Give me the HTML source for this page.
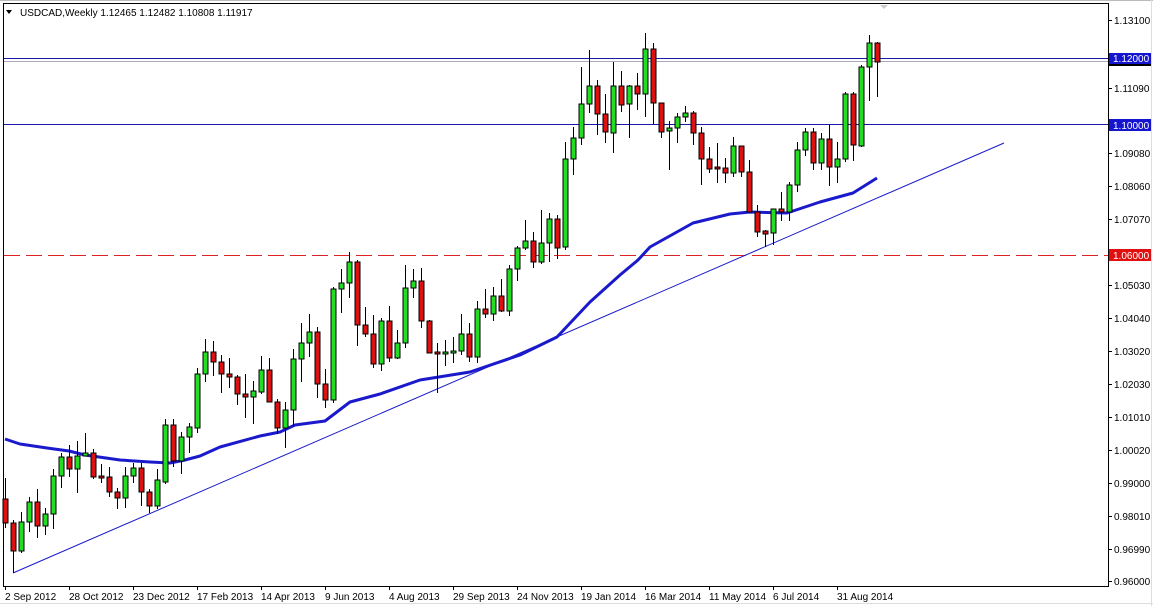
<!DOCTYPE html>
<html><head><meta charset="utf-8"><style>
html,body{margin:0;padding:0;background:#fff;width:1153px;height:606px;overflow:hidden}
svg{display:block}
text{font-family:"Liberation Sans",sans-serif;font-size:10px;fill:#000}
.g{fill:#22dd22;stroke:#000;stroke-width:1}
.r{fill:#dd1111;stroke:#000;stroke-width:1}
</style></head><body>
<svg width="1153" height="606" viewBox="0 0 1153 606" xmlns="http://www.w3.org/2000/svg">
<rect x="0" y="0" width="1153" height="606" fill="#fff"/>
<line x1="0" y1="0.5" x2="1153" y2="0.5" stroke="#bbb"/>
<line x1="1151.5" y1="0" x2="1151.5" y2="606" stroke="#ddd"/>
<line x1="0" y1="603.5" x2="1153" y2="603.5" stroke="#ddd"/>
<rect x="3.5" y="3.5" width="1105" height="583" fill="none" stroke="#000"/>
<!-- header -->
<path d="M6 10 L12 10 L9 14 Z" fill="#000"/>
<text x="20" y="16">USDCAD,Weekly  1.12465 1.12482 1.10808 1.11917</text>
<path d="M880 5 L888 5 L884 9 Z" fill="#ccc"/>
<!-- horizontal lines -->
<line x1="4" y1="58.5" x2="1108" y2="58.5" stroke="#1a1aaa"/>
<line x1="4" y1="61.5" x2="1108" y2="61.5" stroke="#aab"/>
<line x1="4" y1="124.5" x2="1108" y2="124.5" stroke="#1a1aaa"/>
<line x1="4" y1="255.5" x2="1108" y2="255.5" stroke="#dd2222" stroke-dasharray="16,6"/>
<!-- trendline -->
<line x1="13" y1="573" x2="1004" y2="143" stroke="#1a1acc" stroke-width="1"/>
<!-- MA -->
<polyline fill="none" stroke="#1a1acc" stroke-width="3" stroke-linejoin="round" points="5,439 20,444 47,448 69,451 85,455 120,460 150,462 170,463 185,460 200,456 220,447 260,436 280,432 295,425 325,421 350,402 380,394 420,380 470,372 520,355 557,337 590,302 620,275 638,260 650,247 693,223 730,214 750,212 787,213 820,202 853,193 877,178"/>
<!-- candles -->
<g stroke="#000" stroke-width="1">
<line x1="5.5" y1="478" x2="5.5" y2="528"/><rect class="r" x="3" y="499" width="5" height="24"/>
<line x1="13.5" y1="520" x2="13.5" y2="573"/><rect class="r" x="11" y="523" width="5" height="28"/>
<line x1="21.5" y1="512" x2="21.5" y2="553"/><rect class="g" x="19" y="522" width="5" height="29"/>
<line x1="29.5" y1="497" x2="29.5" y2="532"/><rect class="g" x="27" y="502" width="5" height="20"/>
<line x1="37.5" y1="489" x2="37.5" y2="538"/><rect class="r" x="35" y="502" width="5" height="24"/>
<line x1="45.5" y1="508" x2="45.5" y2="535"/><rect class="g" x="43" y="514" width="5" height="12"/>
<line x1="53.5" y1="469" x2="53.5" y2="529"/><rect class="g" x="51" y="476" width="5" height="38"/>
<line x1="61.5" y1="453" x2="61.5" y2="488"/><rect class="g" x="59" y="457" width="5" height="19"/>
<line x1="69.5" y1="445" x2="69.5" y2="477"/><rect class="r" x="67" y="457" width="5" height="12"/>
<line x1="77.5" y1="441" x2="77.5" y2="493"/><rect class="g" x="75" y="456" width="5" height="13"/>
<line x1="85.5" y1="433" x2="85.5" y2="456"/><rect class="g" x="83" y="453" width="5" height="3"/>
<line x1="93.5" y1="449" x2="93.5" y2="479"/><rect class="r" x="91" y="453" width="5" height="24"/>
<line x1="101.5" y1="464" x2="101.5" y2="483"/><rect class="r" x="99" y="476" width="5" height="2"/>
<line x1="109.5" y1="467" x2="109.5" y2="497"/><rect class="r" x="107" y="477" width="5" height="15"/>
<line x1="117.5" y1="488" x2="117.5" y2="509"/><rect class="r" x="115" y="492" width="5" height="6"/>
<line x1="125.5" y1="467" x2="125.5" y2="508"/><rect class="g" x="123" y="476" width="5" height="22"/>
<line x1="133.5" y1="463" x2="133.5" y2="483"/><rect class="g" x="131" y="468" width="5" height="8"/>
<line x1="141.5" y1="463" x2="141.5" y2="506"/><rect class="r" x="139" y="468" width="5" height="24"/>
<line x1="149.5" y1="489" x2="149.5" y2="513"/><rect class="r" x="147" y="492" width="5" height="14"/>
<line x1="157.5" y1="469" x2="157.5" y2="509"/><rect class="g" x="155" y="480" width="5" height="26"/>
<line x1="165.5" y1="419" x2="165.5" y2="484"/><rect class="g" x="163" y="425" width="5" height="57"/>
<line x1="173.5" y1="419" x2="173.5" y2="467"/><rect class="r" x="171" y="425" width="5" height="36"/>
<line x1="181.5" y1="432" x2="181.5" y2="474"/><rect class="g" x="179" y="437" width="5" height="24"/>
<line x1="189.5" y1="423" x2="189.5" y2="453"/><rect class="g" x="187" y="427" width="5" height="10"/>
<line x1="197.5" y1="368" x2="197.5" y2="433"/><rect class="g" x="195" y="374" width="5" height="54"/>
<line x1="205.5" y1="339" x2="205.5" y2="382"/><rect class="g" x="203" y="352" width="5" height="22"/>
<line x1="213.5" y1="341" x2="213.5" y2="376"/><rect class="r" x="211" y="352" width="5" height="10"/>
<line x1="221.5" y1="355" x2="221.5" y2="393"/><rect class="r" x="219" y="362" width="5" height="12"/>
<line x1="229.5" y1="358" x2="229.5" y2="388"/><rect class="r" x="227" y="374" width="5" height="3"/>
<line x1="237.5" y1="375" x2="237.5" y2="405"/><rect class="r" x="235" y="377" width="5" height="17"/>
<line x1="245.5" y1="374" x2="245.5" y2="418"/><rect class="r" x="243" y="394" width="5" height="3"/>
<line x1="253.5" y1="381" x2="253.5" y2="424"/><rect class="g" x="251" y="391" width="5" height="6"/>
<line x1="261.5" y1="356" x2="261.5" y2="394"/><rect class="g" x="259" y="370" width="5" height="22"/>
<line x1="269.5" y1="358" x2="269.5" y2="402"/><rect class="r" x="267" y="370" width="5" height="32"/>
<line x1="277.5" y1="399" x2="277.5" y2="434"/><rect class="r" x="275" y="402" width="5" height="26"/>
<line x1="285.5" y1="402" x2="285.5" y2="448"/><rect class="g" x="283" y="410" width="5" height="18"/>
<line x1="293.5" y1="349" x2="293.5" y2="426"/><rect class="g" x="291" y="359" width="5" height="51"/>
<line x1="301.5" y1="323" x2="301.5" y2="382"/><rect class="g" x="299" y="343" width="5" height="16"/>
<line x1="309.5" y1="314" x2="309.5" y2="357"/><rect class="g" x="307" y="332" width="5" height="11"/>
<line x1="317.5" y1="327" x2="317.5" y2="398"/><rect class="r" x="315" y="332" width="5" height="52"/>
<line x1="325.5" y1="369" x2="325.5" y2="408"/><rect class="r" x="323" y="384" width="5" height="16"/>
<line x1="333.5" y1="287" x2="333.5" y2="403"/><rect class="g" x="331" y="289" width="5" height="111"/>
<line x1="341.5" y1="269" x2="341.5" y2="313"/><rect class="g" x="339" y="283" width="5" height="6"/>
<line x1="349.5" y1="252" x2="349.5" y2="298"/><rect class="g" x="347" y="262" width="5" height="21"/>
<line x1="357.5" y1="260" x2="357.5" y2="346"/><rect class="r" x="355" y="262" width="5" height="63"/>
<line x1="365.5" y1="307" x2="365.5" y2="337"/><rect class="r" x="363" y="325" width="5" height="9"/>
<line x1="373.5" y1="315" x2="373.5" y2="368"/><rect class="r" x="371" y="334" width="5" height="30"/>
<line x1="381.5" y1="318" x2="381.5" y2="371"/><rect class="g" x="379" y="321" width="5" height="43"/>
<line x1="389.5" y1="306" x2="389.5" y2="362"/><rect class="r" x="387" y="321" width="5" height="37"/>
<line x1="397.5" y1="330" x2="397.5" y2="359"/><rect class="g" x="395" y="343" width="5" height="15"/>
<line x1="405.5" y1="265" x2="405.5" y2="348"/><rect class="g" x="403" y="288" width="5" height="55"/>
<line x1="413.5" y1="269" x2="413.5" y2="298"/><rect class="g" x="411" y="281" width="5" height="7"/>
<line x1="421.5" y1="268" x2="421.5" y2="328"/><rect class="r" x="419" y="281" width="5" height="40"/>
<line x1="429.5" y1="320" x2="429.5" y2="353"/><rect class="r" x="427" y="321" width="5" height="32"/>
<line x1="437.5" y1="343" x2="437.5" y2="393"/><rect class="r" x="435" y="352" width="5" height="2"/>
<line x1="445.5" y1="340" x2="445.5" y2="366"/><rect class="g" x="443" y="352" width="5" height="2"/>
<line x1="453.5" y1="337" x2="453.5" y2="363"/><rect class="g" x="451" y="351" width="5" height="2"/>
<line x1="461.5" y1="314" x2="461.5" y2="355"/><rect class="g" x="459" y="334" width="5" height="17"/>
<line x1="469.5" y1="323" x2="469.5" y2="362"/><rect class="r" x="467" y="334" width="5" height="23"/>
<line x1="477.5" y1="301" x2="477.5" y2="363"/><rect class="g" x="475" y="309" width="5" height="48"/>
<line x1="485.5" y1="289" x2="485.5" y2="318"/><rect class="r" x="483" y="309" width="5" height="5"/>
<line x1="493.5" y1="287" x2="493.5" y2="321"/><rect class="g" x="491" y="296" width="5" height="18"/>
<line x1="501.5" y1="279" x2="501.5" y2="312"/><rect class="r" x="499" y="296" width="5" height="15"/>
<line x1="509.5" y1="265" x2="509.5" y2="316"/><rect class="g" x="507" y="269" width="5" height="42"/>
<line x1="517.5" y1="246" x2="517.5" y2="281"/><rect class="g" x="515" y="248" width="5" height="21"/>
<line x1="525.5" y1="220" x2="525.5" y2="250"/><rect class="g" x="523" y="241" width="5" height="7"/>
<line x1="533.5" y1="232" x2="533.5" y2="268"/><rect class="r" x="531" y="241" width="5" height="21"/>
<line x1="541.5" y1="210" x2="541.5" y2="264"/><rect class="g" x="539" y="243" width="5" height="19"/>
<line x1="549.5" y1="213" x2="549.5" y2="262"/><rect class="g" x="547" y="219" width="5" height="24"/>
<line x1="557.5" y1="215" x2="557.5" y2="259"/><rect class="r" x="555" y="219" width="5" height="29"/>
<line x1="565.5" y1="142" x2="565.5" y2="250"/><rect class="g" x="563" y="159" width="5" height="88"/>
<line x1="573.5" y1="127" x2="573.5" y2="175"/><rect class="g" x="571" y="138" width="5" height="21"/>
<line x1="581.5" y1="67" x2="581.5" y2="145"/><rect class="g" x="579" y="104" width="5" height="34"/>
<line x1="589.5" y1="50" x2="589.5" y2="113"/><rect class="g" x="587" y="86" width="5" height="18"/>
<line x1="597.5" y1="80" x2="597.5" y2="135"/><rect class="r" x="595" y="86" width="5" height="28"/>
<line x1="605.5" y1="94" x2="605.5" y2="143"/><rect class="r" x="603" y="114" width="5" height="18"/>
<line x1="613.5" y1="62" x2="613.5" y2="153"/><rect class="g" x="611" y="86" width="5" height="47"/>
<line x1="621.5" y1="71" x2="621.5" y2="112"/><rect class="r" x="619" y="86" width="5" height="19"/>
<line x1="629.5" y1="85" x2="629.5" y2="138"/><rect class="g" x="627" y="86" width="5" height="18"/>
<line x1="637.5" y1="73" x2="637.5" y2="110"/><rect class="r" x="635" y="86" width="5" height="8"/>
<line x1="645.5" y1="33" x2="645.5" y2="117"/><rect class="g" x="643" y="49" width="5" height="45"/>
<line x1="653.5" y1="43" x2="653.5" y2="124"/><rect class="r" x="651" y="49" width="5" height="54"/>
<line x1="661.5" y1="103" x2="661.5" y2="138"/><rect class="r" x="659" y="103" width="5" height="29"/>
<line x1="669.5" y1="121" x2="669.5" y2="170"/><rect class="g" x="667" y="128" width="5" height="3"/>
<line x1="677.5" y1="113" x2="677.5" y2="143"/><rect class="g" x="675" y="117" width="5" height="11"/>
<line x1="685.5" y1="106" x2="685.5" y2="122"/><rect class="g" x="683" y="113" width="5" height="4"/>
<line x1="693.5" y1="111" x2="693.5" y2="145"/><rect class="r" x="691" y="113" width="5" height="20"/>
<line x1="701.5" y1="127" x2="701.5" y2="185"/><rect class="r" x="699" y="133" width="5" height="26"/>
<line x1="709.5" y1="147" x2="709.5" y2="173"/><rect class="r" x="707" y="159" width="5" height="10"/>
<line x1="717.5" y1="143" x2="717.5" y2="183"/><rect class="r" x="715" y="167" width="5" height="2"/>
<line x1="725.5" y1="158" x2="725.5" y2="183"/><rect class="r" x="723" y="168" width="5" height="5"/>
<line x1="733.5" y1="137" x2="733.5" y2="177"/><rect class="g" x="731" y="146" width="5" height="27"/>
<line x1="741.5" y1="146" x2="741.5" y2="177"/><rect class="r" x="739" y="146" width="5" height="26"/>
<line x1="749.5" y1="160" x2="749.5" y2="213"/><rect class="r" x="747" y="172" width="5" height="40"/>
<line x1="757.5" y1="205" x2="757.5" y2="237"/><rect class="r" x="755" y="212" width="5" height="20"/>
<line x1="765.5" y1="230" x2="765.5" y2="247"/><rect class="r" x="763" y="231" width="5" height="3"/>
<line x1="773.5" y1="209" x2="773.5" y2="245"/><rect class="g" x="771" y="209" width="5" height="24"/>
<line x1="781.5" y1="192" x2="781.5" y2="221"/><rect class="r" x="779" y="209" width="5" height="3"/>
<line x1="789.5" y1="182" x2="789.5" y2="221"/><rect class="g" x="787" y="185" width="5" height="27"/>
<line x1="797.5" y1="142" x2="797.5" y2="192"/><rect class="g" x="795" y="150" width="5" height="35"/>
<line x1="805.5" y1="128" x2="805.5" y2="156"/><rect class="g" x="803" y="132" width="5" height="18"/>
<line x1="813.5" y1="128" x2="813.5" y2="170"/><rect class="r" x="811" y="132" width="5" height="31"/>
<line x1="821.5" y1="133" x2="821.5" y2="170"/><rect class="g" x="819" y="139" width="5" height="24"/>
<line x1="829.5" y1="125" x2="829.5" y2="186"/><rect class="r" x="827" y="139" width="5" height="28"/>
<line x1="837.5" y1="142" x2="837.5" y2="183"/><rect class="g" x="835" y="159" width="5" height="8"/>
<line x1="845.5" y1="92" x2="845.5" y2="162"/><rect class="g" x="843" y="94" width="5" height="65"/>
<line x1="853.5" y1="92" x2="853.5" y2="161"/><rect class="r" x="851" y="94" width="5" height="51"/>
<line x1="861.5" y1="65" x2="861.5" y2="147"/><rect class="g" x="859" y="67" width="5" height="79"/>
<line x1="869.5" y1="35" x2="869.5" y2="101"/><rect class="g" x="867" y="43" width="5" height="24"/>
<line x1="877.5" y1="42" x2="877.5" y2="97"/><rect class="r" x="875" y="43" width="5" height="19"/>
</g>
<!-- price axis ticks -->
<g stroke="#000">
<line x1="1108" y1="20.5" x2="1112" y2="20.5"/><line x1="1108" y1="88.5" x2="1112" y2="88.5"/>
<line x1="1108" y1="153.5" x2="1112" y2="153.5"/><line x1="1108" y1="186.5" x2="1112" y2="186.5"/>
<line x1="1108" y1="219.5" x2="1112" y2="219.5"/><line x1="1108" y1="285.5" x2="1112" y2="285.5"/>
<line x1="1108" y1="318.5" x2="1112" y2="318.5"/><line x1="1108" y1="351.5" x2="1112" y2="351.5"/>
<line x1="1108" y1="384.5" x2="1112" y2="384.5"/><line x1="1108" y1="417.5" x2="1112" y2="417.5"/>
<line x1="1108" y1="450.5" x2="1112" y2="450.5"/><line x1="1108" y1="483.5" x2="1112" y2="483.5"/>
<line x1="1108" y1="516.5" x2="1112" y2="516.5"/><line x1="1108" y1="549.5" x2="1112" y2="549.5"/>
<line x1="1108" y1="581.5" x2="1112" y2="581.5"/>
</g>
<g>
<text x="1114" y="24">1.13100</text>
<text x="1114" y="92">1.11090</text>
<text x="1114" y="157">1.09080</text>
<text x="1114" y="190">1.08060</text>
<text x="1114" y="223">1.07070</text>
<text x="1114" y="289">1.05030</text>
<text x="1114" y="322">1.04040</text>
<text x="1114" y="355">1.03020</text>
<text x="1114" y="388">1.02030</text>
<text x="1114" y="421">1.01010</text>
<text x="1114" y="454">1.00020</text>
<text x="1114" y="487">0.99000</text>
<text x="1114" y="520">0.98010</text>
<text x="1114" y="553">0.96990</text>
<text x="1114" y="585">0.96000</text>
</g>
<rect x="1109" y="62" width="42" height="4" fill="#000"/>
<rect x="1109" y="53" width="42" height="11" fill="#1515d0"/>
<text x="1113" y="62" style="fill:#fff">1.12000</text>
<rect x="1109" y="119" width="42" height="12" fill="#1515d0"/>
<text x="1113" y="129" style="fill:#fff">1.10000</text>
<rect x="1109" y="249" width="42" height="12" fill="#e01010"/>
<text x="1113" y="259" style="fill:#fff">1.06000</text>
<!-- date axis -->
<g stroke="#000">
<line x1="5.5" y1="586" x2="5.5" y2="590"/><line x1="69.5" y1="586" x2="69.5" y2="590"/>
<line x1="133.5" y1="586" x2="133.5" y2="590"/><line x1="197.5" y1="586" x2="197.5" y2="590"/>
<line x1="261.5" y1="586" x2="261.5" y2="590"/><line x1="325.5" y1="586" x2="325.5" y2="590"/>
<line x1="389.5" y1="586" x2="389.5" y2="590"/><line x1="453.5" y1="586" x2="453.5" y2="590"/>
<line x1="517.5" y1="586" x2="517.5" y2="590"/><line x1="581.5" y1="586" x2="581.5" y2="590"/>
<line x1="645.5" y1="586" x2="645.5" y2="590"/><line x1="709.5" y1="586" x2="709.5" y2="590"/>
<line x1="773.5" y1="586" x2="773.5" y2="590"/><line x1="837.5" y1="586" x2="837.5" y2="590"/>
</g>
<g>
<text x="5" y="600">2 Sep 2012</text>
<text x="69" y="600">28 Oct 2012</text>
<text x="133" y="600">23 Dec 2012</text>
<text x="197" y="600">17 Feb 2013</text>
<text x="261" y="600">14 Apr 2013</text>
<text x="325" y="600">9 Jun 2013</text>
<text x="389" y="600">4 Aug 2013</text>
<text x="453" y="600">29 Sep 2013</text>
<text x="517" y="600">24 Nov 2013</text>
<text x="581" y="600">19 Jan 2014</text>
<text x="645" y="600">16 Mar 2014</text>
<text x="709" y="600">11 May 2014</text>
<text x="773" y="600">6 Jul 2014</text>
<text x="837" y="600">31 Aug 2014</text>
</g>
</svg>
</body></html>
